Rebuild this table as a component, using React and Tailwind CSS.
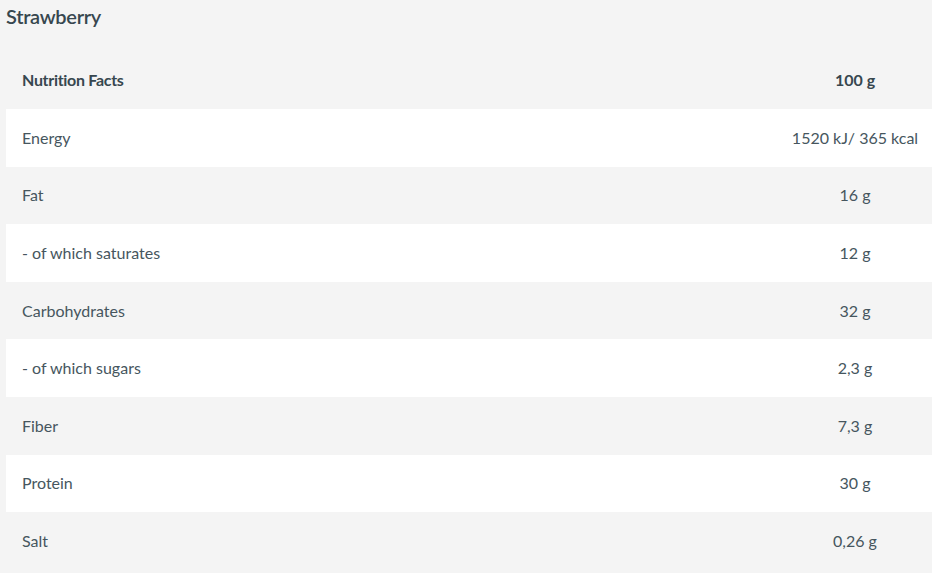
import React from 'react';

const rows = [
  ['Energy', '1520 kJ/ 365 kcal'],
  ['Fat', '16 g'],
  ['- of which saturates', '12 g'],
  ['Carbohydrates', '32 g'],
  ['- of which sugars', '2,3 g'],
  ['Fiber', '7,3 g'],
  ['Protein', '30 g'],
  ['Salt', '0,26 g'],
];

const App = () => {
  return (
    <div className="min-h-[573px] bg-[#f4f4f4] pl-[6px] overflow-hidden text-[#37474f]" style={{ fontFamily: 'Lato, "Open Sans", sans-serif' }}>
      <h2 className="text-[20px] leading-[24px] pt-[4px] h-[51px] font-semibold tracking-[-0.3px]">Strawberry</h2>
      <table className="w-[926px] border-collapse text-[16px]">
        <thead>
          <tr className="h-[58px]">
            <th className="text-left font-bold pl-4 tracking-[-0.3px]">Nutrition Facts</th>
            <th className="w-[154px] text-center font-bold">100 g</th>
          </tr>
        </thead>
        <tbody className="text-[#46565e]">
          {rows.map(([label, value], i) => (
            <tr key={label} className={`h-[57.6px] ${i % 2 === 0 ? 'bg-white' : 'bg-[#f4f4f4]'}`}>
              <td className="pl-4 pt-[-1px]">{label}</td>
              <td className="text-center whitespace-nowrap">{value}</td>
            </tr>
          ))}
        </tbody>
      </table>
    </div>
  );
};

export default App;
